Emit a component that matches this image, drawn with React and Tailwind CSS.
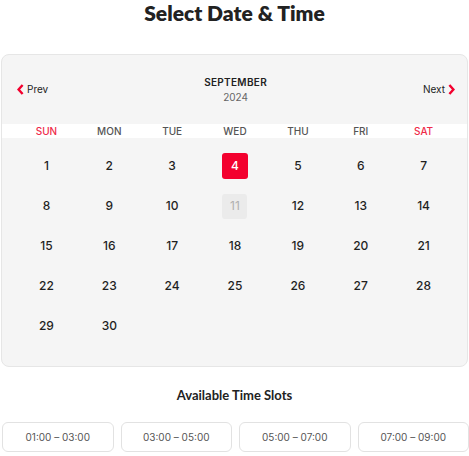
const weekdays = ['SUN', 'MON', 'TUE', 'WED', 'THU', 'FRI', 'SAT']
const slots = ['01:00 – 03:00', '03:00 – 05:00', '05:00 – 07:00', '07:00 – 09:00']

// September 2024 starts on a Sunday
const days = Array.from({ length: 30 }, (_, i) => i + 1)

function Chevron({ dir }) {
  return (
    <svg width="7" height="11" viewBox="0 0 7 11" className="shrink-0">
      <polyline
        points={dir === 'left' ? '5.6,1 1.6,5.5 5.6,10' : '1.4,1 5.4,5.5 1.4,10'}
        fill="none"
        stroke="#f3002e"
        strokeWidth="2.4"
        strokeLinejoin="miter"
      />
    </svg>
  )
}

function DayCell({ day }) {
  if (day === 4) {
    return (
      <div className="flex h-10 items-center justify-center">
        <span className="flex h-[26px] w-[26px] items-center justify-center rounded-[3px] bg-[#f3002e] text-[12px] font-medium text-white">
          {day}
        </span>
      </div>
    )
  }
  if (day === 11) {
    return (
      <div className="flex h-10 items-center justify-center">
        <span className="flex h-[25px] w-[25px] items-center justify-center rounded-[3px] bg-[#ebebeb] text-[12px] text-[#b0b0b0]">
          {day}
        </span>
      </div>
    )
  }
  return (
    <div className="flex h-10 items-center justify-center text-[12px] font-medium text-[#1f1f1f]">{day}</div>
  )
}

export default function App() {
  return (
    <div className="w-[469px] h-[456px] overflow-hidden bg-white font-['Inter',sans-serif]">
      <h1 className="h-[26px] text-center text-[21px] leading-[26px] font-extrabold text-[#222] font-['Lato',sans-serif]">
        Select Date &amp; Time
      </h1>

      <section className="ml-[1px] w-[467px] mt-[28px] rounded-lg border border-[#e6e6e6] bg-[#f5f5f5]">
        <div className="flex h-[69px] items-center justify-between pl-[15px] pr-[12px]">
          <button className="flex items-center gap-[3px] text-[10px] text-[#222]">
            <Chevron dir="left" />
            Prev
          </button>
          <div className="flex flex-col items-center leading-[15px]">
            <span className="text-[10px] font-semibold tracking-[0.3px] text-[#222]">SEPTEMBER</span>
            <span className="text-[10px] text-[#666]">2024</span>
          </div>
          <button className="flex items-center gap-[3px] text-[10px] text-[#222]">
            Next
            <Chevron dir="right" />
          </button>
        </div>

        <div className="grid h-[14px] grid-cols-7 bg-white pl-[13px] pr-[12px] text-[10px] leading-[14px] font-medium">
          {weekdays.map((d, i) => (
            <div
              key={d}
              className={i === 0 || i === 6 ? 'text-center text-[#ef2b4a]' : 'text-center text-[#555]'}
            >
              {d}
            </div>
          ))}
        </div>

        <div className="grid grid-cols-7 pl-[13px] pr-[12px] pt-2 pb-5">
          {days.map((d) => (
            <DayCell key={d} day={d} />
          ))}
        </div>
      </section>

      <h2 className="mt-[19px] h-[18px] text-center text-[13px] leading-[18px] font-bold text-[#222] font-['Lato',sans-serif]">
        Available Time Slots
      </h2>

      <div className="mt-[18px] grid w-[469px] grid-cols-4 gap-[7px] pl-[2px]">
        {slots.map((s) => (
          <div
            key={s}
            className="flex h-[30px] items-center justify-center rounded-md border border-[#e2e2e2] bg-white text-[10px] text-[#555]"
          >
            {s}
          </div>
        ))}
      </div>
    </div>
  )
}
